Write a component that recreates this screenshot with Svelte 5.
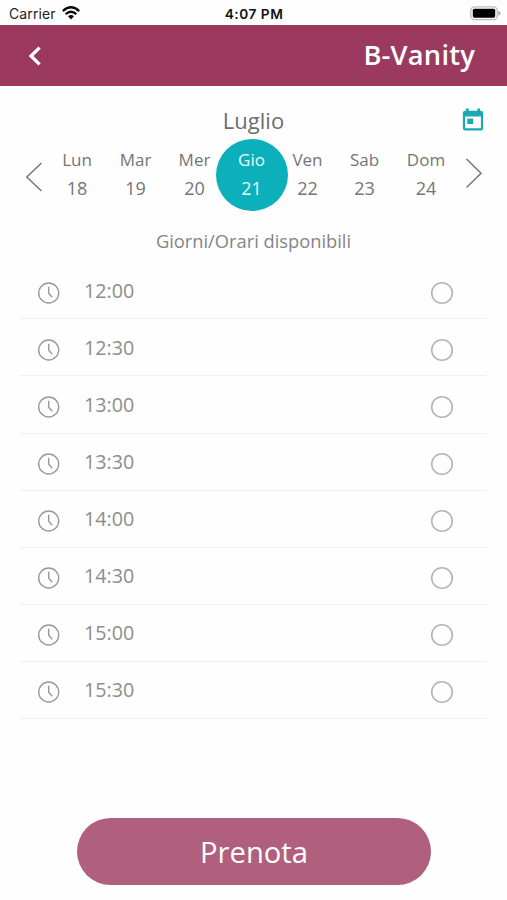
<script>
  const days = [
    { name: 'Lun', date: 18, width: 58 },
    { name: 'Mar', date: 19, width: 59 },
    { name: 'Mer', date: 20, width: 59 },
    { name: 'Gio', date: 21, width: 55 },
    { name: 'Ven', date: 22, width: 57 },
    { name: 'Sab', date: 23, width: 57 },
    { name: 'Dom', date: 24, width: 66 }
  ];
  const times = ['12:00', '12:30', '13:00', '13:30', '14:00', '14:30', '15:00', '15:30'];
  let selected = $state(21);
  let slot = $state('');
</script>

<div class="screen">
  <div class="status">
    <div class="carrier">
      <span>Carrier</span>
      <svg width="18" height="14" viewBox="0 0 18 14" fill="none" stroke="#0a0a0a" stroke-width="2.3">
        <path d="M0.8 5.1Q9-2.5 17.2 5.1" />
        <path d="M3.7 8.2Q9 3.3 14.3 8.2" />
        <path d="M6 10.2Q9 7.9 12 10.2L9 13.4Z" fill="#0a0a0a" stroke="none" />
      </svg>
    </div>
    <div class="clock">4:07 PM</div>
    <svg class="battery" width="31" height="15" viewBox="0 0 31 15">
      <rect x="0.8" y="0.8" width="26.4" height="12.8" rx="3.6" fill="#fff" stroke="#bdbdbd" stroke-width="1.3" />
      <rect x="2.8" y="2.7" width="22.4" height="9" rx="1.6" fill="#000" />
      <path d="M28.4 4.7Q30.6 5.6 30.6 7.2T28.4 9.7Z" fill="#aaa" />
    </svg>
  </div>

  <header>
    <svg width="14" height="20" viewBox="0 0 14 20" fill="none" stroke="#fff" stroke-width="3.3">
      <path d="M12.6 1.6L4 10L12.6 18.4" />
    </svg>
    <h1>B-Vanity</h1>
  </header>

  <div class="month">
    <span>Luglio</span>
    <svg class="calendar" width="22" height="24" viewBox="0 0 22 24" fill="#18a9b3">
      <path fill-rule="evenodd" d="M4 0.5h2.7v2.3h8.6V0.5H18v2.3h0.8a2.3 2.3 0 0 1 2.3 2.3v15.1a2.3 2.3 0 0 1-2.3 2.3H3.2a2.3 2.3 0 0 1-2.3-2.3V5.1a2.3 2.3 0 0 1 2.3-2.3H4ZM3.1 8.4v11.9h15.8V8.4Z" />
      <rect x="5.3" y="10.6" width="5.8" height="5.4" />
    </svg>
  </div>

  <div class="week">
    <svg class="prev" width="18" height="32" viewBox="0 0 18 32" fill="none" stroke="#777" stroke-width="1.5">
      <path d="M16.5 2L1.8 16L16.5 30" />
    </svg>
    <div class="days">
      {#each days as day}
        <button class="day" class:active={selected === day.date} style="width: {day.width}px" onclick={() => (selected = day.date)}>
          <span class="name">{day.name}</span>
          <span class="date">{day.date}</span>
        </button>
      {/each}
    </div>
    <svg class="next" width="18" height="32" viewBox="0 0 18 32" fill="none" stroke="#777" stroke-width="1.5">
      <path d="M1.5 2L16 16.2L1.5 30.5" />
    </svg>
  </div>

  <p class="caption">Giorni/Orari disponibili</p>

  <div class="slots">
    {#each times as time}
      <button class="slot" onclick={() => (slot = time)}>
        <svg width="24" height="24" viewBox="0 0 24 24" fill="none" stroke="#999" stroke-width="1.4">
          <circle cx="11.7" cy="12" r="10" />
          <path d="M11.7 5.8V12.2L15.2 16.2" />
        </svg>
        <span class="time">{time}</span>
        <svg class="radio" class:on={slot === time} width="24" height="24" viewBox="0 0 24 24" fill="none" stroke="#b4b4b4" stroke-width="1.6">
          <circle cx="12" cy="12" r="10.3" />
        </svg>
      </button>
    {/each}
  </div>

  <button class="book">Prenota</button>
</div>

<style>
  :global(body) {
    margin: 0;
    background: #fff;
  }
  .screen {
    box-sizing: border-box;
    width: 507px;
    height: 900px;
    overflow: hidden;
    background: #fefefe;
    font-family: 'Open Sans', 'Noto Sans', sans-serif;
    display: flex;
    flex-direction: column;
  }
  button {
    font: inherit;
    border: 0;
    padding: 0;
    background: none;
    display: block;
  }
  svg {
    display: block;
    flex: none;
  }
  .status {
    height: 25.4px;
    flex: none;
    box-sizing: border-box;
    padding: 0 6px 0 9px;
    display: grid;
    grid-template-columns: 1fr auto 1fr;
    align-items: center;
    font-family: Inter, 'Liberation Sans', sans-serif;
    font-size: 14px;
    color: #222;
  }
  .carrier {
    display: flex;
    align-items: center;
    gap: 6px;
    padding-top: 2px;
    letter-spacing: 0.1px;
  }
  .carrier svg {
    margin-top: -2px;
  }
  .clock {
    padding-top: 2px;
    margin-right: 2px;
    font-weight: 600;
    font-size: 13.7px;
    letter-spacing: 0.5px;
    color: #111;
  }
  .battery {
    justify-self: end;
    margin-top: 1px;
  }
  header {
    height: 60.6px;
    flex: none;
    box-sizing: border-box;
    padding: 0 32px 0 27px;
    background: #9b395e;
    display: flex;
    align-items: center;
    justify-content: space-between;
  }
  h1 {
    margin: 0;
    padding-bottom: 2px;
    color: #fff;
    font-size: 27.3px;
    line-height: 36px;
    font-weight: 650;
    letter-spacing: 0.2px;
  }
  .month {
    height: 53px;
    flex: none;
    box-sizing: border-box;
    padding: 19px 23px 0 0;
    display: grid;
    grid-template-columns: 1fr auto 1fr;
    color: #6d6d6d;
    font-size: 22px;
    line-height: 30px;
  }
  .month span {
    grid-column: 2;
    margin-left: 23px;
  }
  .calendar {
    justify-self: end;
    margin-top: 3px;
  }
  .week {
    height: 72px;
    flex: none;
    padding: 0 24px 0 25px;
    display: flex;
  }
  .prev {
    margin: 22px 5px 0 0;
  }
  .next {
    margin: 18px 0 0 6px;
  }
  .days {
    display: flex;
  }
  .day {
    height: 72px;
    position: relative;
    color: #757575;
    display: flex;
    flex-direction: column;
    align-items: center;
  }
  .day span {
    position: relative;
    line-height: 28px;
  }
  .name {
    padding-top: 7px;
    font-size: 17px;
  }
  .date {
    font-size: 18px;
  }
  .active {
    color: #e8fbfc;
  }
  .active::before {
    content: '';
    position: absolute;
    top: 0;
    left: 50%;
    width: 72px;
    height: 72px;
    margin-left: -36px;
    border-radius: 50%;
    background: #0bb0ba;
  }
  .caption {
    margin: 17px 0 0;
    text-align: center;
    color: #858585;
    font-size: 18.3px;
    line-height: 26px;
  }
  .slots {
    margin: 8.4px 20px 0;
  }
  .slot {
    width: 100%;
    height: 57.05px;
    box-sizing: border-box;
    padding: 0 33px 0 17px;
    border-bottom: 1.5px solid #f1f1f1;
    display: flex;
    align-items: center;
    color: #8d8d8d;
    font-size: 19.7px;
  }
  .slot svg {
    margin-top: 5.5px;
  }
  .time {
    margin-left: 23px;
    padding-top: 0.5px;
    flex: 1;
    text-align: left;
  }
  .radio.on {
    fill: #0bb0ba;
  }
  .book {
    width: 354px;
    height: 67px;
    margin: 99.2px 0 0 77px;
    padding-top: 2px;
    border-radius: 34px;
    background: #b0607c;
    color: #fff;
    font-size: 29.2px;
  }
</style>
